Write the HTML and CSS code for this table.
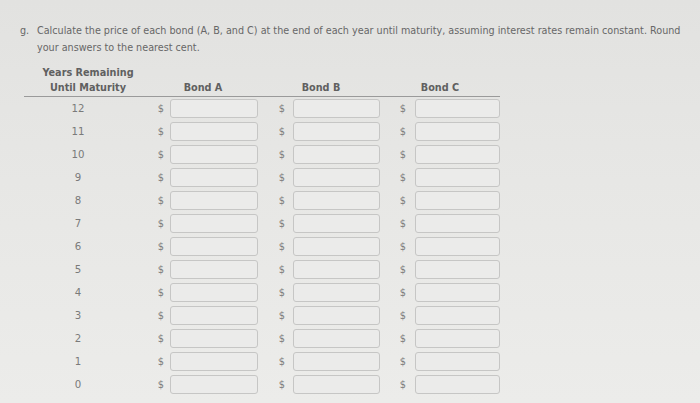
FILE: index.html
```html
<!DOCTYPE html>
<html lang="en">
<head>
<meta charset="utf-8">
<title>Bond prices</title>
<link rel="stylesheet" href="styles.css">
</head>
<body>
<div class="page">
  <div class="question">
    <span class="qlabel">g.</span>
    <p class="qtext">Calculate the price of each bond (A, B, and C) at the end of each year until maturity, assuming interest rates remain constant. Round your answers to the nearest cent.</p>
  </div>
  <div class="table">
    <div class="th th-years">Years Remaining<br>Until Maturity</div>
    <div class="th th-a">Bond A</div>
    <div class="th th-b">Bond B</div>
    <div class="th th-c">Bond C</div>

    <div class="num">12</div><div class="cur cur-a">$</div><div class="box"></div><div class="cur cur-b">$</div><div class="box"></div><div class="cur cur-c">$</div><div class="box"></div>
    <div class="num">11</div><div class="cur cur-a">$</div><div class="box"></div><div class="cur cur-b">$</div><div class="box"></div><div class="cur cur-c">$</div><div class="box"></div>
    <div class="num">10</div><div class="cur cur-a">$</div><div class="box"></div><div class="cur cur-b">$</div><div class="box"></div><div class="cur cur-c">$</div><div class="box"></div>
    <div class="num">9</div><div class="cur cur-a">$</div><div class="box"></div><div class="cur cur-b">$</div><div class="box"></div><div class="cur cur-c">$</div><div class="box"></div>
    <div class="num">8</div><div class="cur cur-a">$</div><div class="box"></div><div class="cur cur-b">$</div><div class="box"></div><div class="cur cur-c">$</div><div class="box"></div>
    <div class="num">7</div><div class="cur cur-a">$</div><div class="box"></div><div class="cur cur-b">$</div><div class="box"></div><div class="cur cur-c">$</div><div class="box"></div>
    <div class="num">6</div><div class="cur cur-a">$</div><div class="box"></div><div class="cur cur-b">$</div><div class="box"></div><div class="cur cur-c">$</div><div class="box"></div>
    <div class="num">5</div><div class="cur cur-a">$</div><div class="box"></div><div class="cur cur-b">$</div><div class="box"></div><div class="cur cur-c">$</div><div class="box"></div>
    <div class="num">4</div><div class="cur cur-a">$</div><div class="box"></div><div class="cur cur-b">$</div><div class="box"></div><div class="cur cur-c">$</div><div class="box"></div>
    <div class="num">3</div><div class="cur cur-a">$</div><div class="box"></div><div class="cur cur-b">$</div><div class="box"></div><div class="cur cur-c">$</div><div class="box"></div>
    <div class="num">2</div><div class="cur cur-a">$</div><div class="box"></div><div class="cur cur-b">$</div><div class="box"></div><div class="cur cur-c">$</div><div class="box"></div>
    <div class="num">1</div><div class="cur cur-a">$</div><div class="box"></div><div class="cur cur-b">$</div><div class="box"></div><div class="cur cur-c">$</div><div class="box"></div>
    <div class="num">0</div><div class="cur cur-a">$</div><div class="box"></div><div class="cur cur-b">$</div><div class="box"></div><div class="cur cur-c">$</div><div class="box"></div>
  </div>
</div>
</body>
</html>
```
FILE: styles.css
```css
html, body {
  margin: 0;
  padding: 0;
}
body {
  width: 700px;
  height: 403px;
  overflow: hidden;
  background: linear-gradient(180deg, #e2e2e0 0%, #e7e7e5 45%, #ececea 100%);
  font-family: "DejaVu Sans", Verdana, sans-serif;
  color: #676767;
}
.page {
  padding: 22px 0 0 20px;
}
.question {
  display: flex;
  font-size: 9.65px;
  line-height: 17px;
}
.qlabel {
  width: 17px;
  flex: none;
}
.qtext {
  margin: 0;
  width: 652px;
}
.table {
  margin: 9px 0 0 4px;
  display: grid;
  grid-template-columns: 108px 38px 88px 35px 87px 35px 85px;
  grid-template-rows: 32px;
  grid-auto-rows: 23px;
  width: 476px;
}
.th {
  font-weight: bold;
  font-size: 9.7px;
  line-height: 15px;
  color: #606060;
  border-bottom: 1px solid #9a9a9a;
  display: flex;
  align-items: flex-end;
  justify-content: center;
  text-align: center;
  padding-bottom: 1px;
  box-sizing: border-box;
}
.th-years {
  grid-column: 1 / span 1;
  padding-left: 20px;
  white-space: nowrap;
}
.th-a {
  grid-column: 2 / span 2;
  padding-left: 16px;
}
.th-b {
  grid-column: 4 / span 2;
  padding-left: 4px;
}
.th-c {
  grid-column: 6 / span 2;
  padding-left: 0;
}
.num {
  font-size: 10.2px;
  color: #7a7a7a;
  display: flex;
  align-items: center;
  justify-content: center;
}
.cur {
  font-size: 9.8px;
  color: #7d7d7d;
  display: flex;
  align-items: center;
  justify-content: flex-end;
}
.cur-a { padding-right: 6px; }
.cur-b { padding-right: 8px; }
.cur-c { padding-right: 9px; }
.box {
  align-self: center;
  height: 19px;
  box-sizing: border-box;
  border: 1px solid #c6c6c5;
  border-radius: 3px;
  background: #ebebea;
}
```
